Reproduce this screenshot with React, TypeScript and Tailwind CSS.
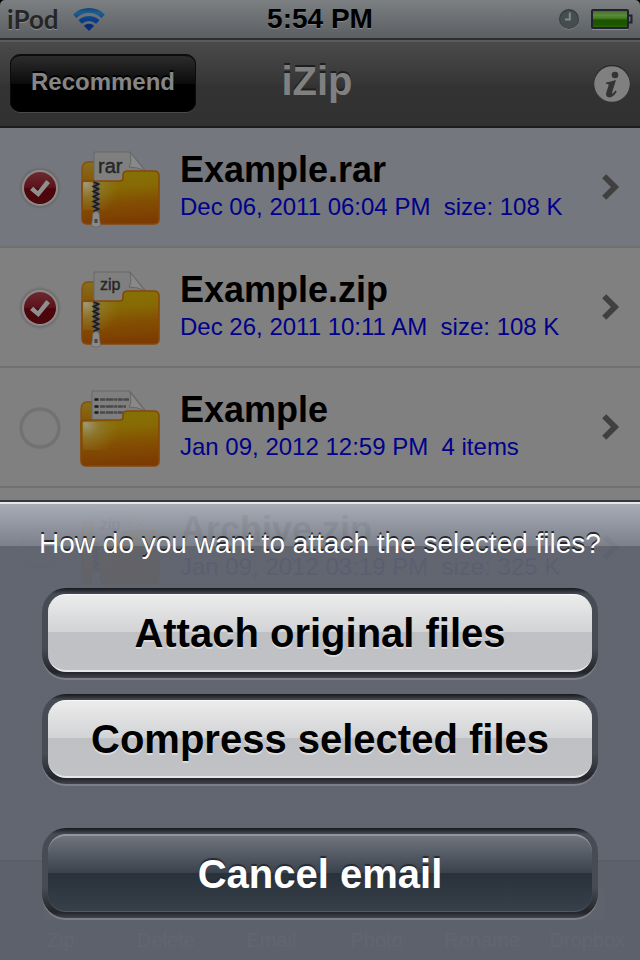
import { useState } from "react";

type Kind = "rar" | "zip" | "folder";

interface Entry {
  name: string;
  detail: string;
  kind: Kind;
  selected: boolean;
}

const entries: Entry[] = [
  { name: "Example.rar", detail: "Dec 06, 2011 06:04 PM  size: 108 K", kind: "rar", selected: true },
  { name: "Example.zip", detail: "Dec 26, 2011 10:11 AM  size: 108 K", kind: "zip", selected: true },
  { name: "Example", detail: "Jan 09, 2012 12:59 PM  4 items", kind: "folder", selected: false },
  { name: "Archive.zip", detail: "Jan 09, 2012 03:19 PM  size: 325 K", kind: "zip", selected: false },
];

const tools = ["Zip", "Delete", "Email", "Photo", "Rename", "Dropbox"];

function WifiIcon() {
  return (
    <svg width="32" height="24" viewBox="0 0 32 24" aria-hidden="true">
      <defs>
        <linearGradient id="wifi" x1="0" y1="0" x2="0" y2="24" gradientUnits="userSpaceOnUse">
          <stop offset="0" stopColor="#123c74" />
          <stop offset="0.25" stopColor="#1b6190" />
          <stop offset="0.5" stopColor="#0b3f88" />
          <stop offset="1" stopColor="#052d78" />
        </linearGradient>
      </defs>
      <g fill="none" stroke="url(#wifi)" strokeWidth="4.8">
        <path d="M1.8 9.2 A20.5 20.5 0 0 1 30.2 9.2" />
        <path d="M7.2 15 A12.8 12.8 0 0 1 24.8 15" />
      </g>
      <path d="M16 24 L10.8 18.8 A7.4 7.4 0 0 1 21.2 18.8 Z" fill="#052d78" />
    </svg>
  );
}

function ClockIcon() {
  return (
    <svg width="20" height="21" viewBox="0 0 20 21" aria-hidden="true">
      <circle cx="10" cy="11" r="9.6" fill="#8a8e90" />
      <circle cx="10" cy="10" r="10" fill="#353b3e" />
      <circle cx="10" cy="10.3" r="9" fill="#454d4e" />
      <path d="M10.8 3.5 V10.6 H6" fill="none" stroke="#858a8b" strokeWidth="2" />
    </svg>
  );
}

function BatteryIcon() {
  return (
    <svg width="42" height="21" viewBox="0 0 42 21" aria-hidden="true">
      <defs>
        <linearGradient id="battery" x1="0" y1="0" x2="0" y2="1">
          <stop offset="0" stopColor="#3d6b22" />
          <stop offset="0.3" stopColor="#5d8a3a" />
          <stop offset="0.5" stopColor="#3a7318" />
          <stop offset="0.55" stopColor="#1c5403" />
          <stop offset="0.8" stopColor="#1c5600" />
          <stop offset="1" stopColor="#2f6d0a" />
        </linearGradient>
      </defs>
      <path d="M1 20.5 H37" stroke="#8b8f92" />
      <rect x="1" y="1" width="36" height="18" rx="1" fill="url(#battery)" stroke="#21212f" strokeWidth="2" />
      <path d="M38 6.5 H40.5 V13.5 H38" fill="none" stroke="#21212f" strokeWidth="2" />
    </svg>
  );
}

function InfoIcon() {
  return (
    <svg width="36" height="37" viewBox="0 0 36 37" aria-hidden="true">
      <circle cx="18" cy="18" r="18" fill="#252525" />
      <circle cx="18" cy="19" r="17.8" fill="#808080" />
      <circle cx="21" cy="10" r="3.3" fill="#343434" />
      <path
        d="M12 17.4 Q16.5 16.6 22 15 L18.4 26.4 Q17.6 29 18.6 28.6 Q19.8 28 21.4 25.6 L22.8 26.6 Q19.6 32.4 15.4 32.4 Q11.2 32.2 12.2 27.8 L14.6 20.4 Q15.2 18.6 12 18.9 Z"
        fill="#343434"
      />
    </svg>
  );
}

function FolderIcon({ kind }: { kind: Kind }) {
  const archive = kind !== "folder";
  return (
    <svg width="80" height="78" viewBox="0 0 80 78" className="mt-1 shrink-0" aria-hidden="true">
      <defs>
        <linearGradient id="folderFront" x1="0.4" y1="0" x2="0.5" y2="1">
          <stop offset="0" stopColor="#857206" />
          <stop offset="0.3" stopColor="#876a04" />
          <stop offset="0.6" stopColor="#834f02" />
          <stop offset="1" stopColor="#7c3a02" />
        </linearGradient>
        <linearGradient id="folderBack" x1="0" y1="0" x2="0" y2="1">
          <stop offset="0" stopColor="#87701c" />
          <stop offset="1" stopColor="#834b00" />
        </linearGradient>
        <radialGradient id="folderShine" gradientUnits="userSpaceOnUse" cx="6" cy="34" r="34">
          <stop offset="0" stopColor="#a09a80" stopOpacity="0.95" />
          <stop offset="0.4" stopColor="#928040" stopOpacity="0.6" />
          <stop offset="1" stopColor="#8f7a20" stopOpacity="0" />
        </radialGradient>
      </defs>
      <path
        d={archive ? "M2 20 Q2 12 8 12 H20 V40 H2 Z" : "M1 20 Q1 12 7 12 H20 V40 H1 Z"}
        fill="url(#folderBack)"
        stroke="#85500f"
        strokeWidth="1.4"
      />
      <path
        d={archive ? "M14 2 H50 L65 20 V34 H14 Z" : "M12 1 H50 L65 20 V34 H12 Z"}
        fill="#7f7f7f"
        stroke="#686868"
      />
      <path d="M50 2 Q52 13 49 17 Q58 17 65 21 Z" fill="#898989" stroke="#666666" />
      {kind === "folder" && (
        <g stroke="#4a4a4a" strokeWidth="2.4">
          <path d="M14.5 9.5 H18.5 M14.5 16.5 H18.5 M14.5 22.5 H18.5" stroke="#1b1b1b" />
          <path d="M20 9.5 H49 M20 16.5 H46 M20 22.5 H44" strokeDasharray="5 0.6 8 0.6 3 0.6" />
        </g>
      )}
      {archive && (
        <text
          x={kind === "rar" ? 18 : 20}
          y={kind === "rar" ? 23 : 20}
          fontFamily="'Liberation Sans', Arial, sans-serif"
          fontSize={kind === "rar" ? 20 : 16}
          fill="#262626"
          stroke="#262626"
          strokeWidth="0.4"
        >
          {kind}
        </text>
      )}
      <path
        d={
          archive
            ? "M2 33 Q2 31 5 31 H40 Q43 31 43 28 V25 Q43 21 48 21 H74 Q79 21 79 26 V69 Q79 74 74 74 H7 Q2 74 2 69 Z"
            : "M1 33 Q1 30 5 30 H40 Q43 30 43 27 V25 Q43 21 48 21 H74 Q79 21 79 26 V71 Q79 76 74 76 H6 Q1 76 1 71 Z"
        }
        fill="url(#folderFront)"
        stroke="#874708"
        strokeWidth="1.6"
      />
      <path d="M3 32 H44 L48 23 H77 V60 H3 Z" fill="url(#folderShine)" />
      {archive && (
        <g>
          <path d="M16 31 V63" stroke="#5c5c5c" strokeWidth="6" />
          <path
            d="M13.500 32 L18.500 34 L13.500 36.500 L18.500 39 L13.500 41.500 L18.500 44 L13.500 46.500 L18.500 49 L13.500 51.500 L18.500 54 L13.500 56.500 L18.500 59 L13.500 61.500"
            fill="none"
            stroke="#1c1c1c"
            strokeWidth="1.8"
          />
          <path d="M13 63 Q16 60 19 63 L20.500 76 Q16 78.500 11.500 76 Z" fill="#898989" stroke="#666666" strokeWidth="0.8" />
          <rect x="14.500" y="69" width="3" height="4" fill="#4b4438" />
        </g>
      )}
    </svg>
  );
}

function SelectionMark({ selected }: { selected: boolean }) {
  return (
    <svg width="44" height="44" viewBox="0 0 44 44" aria-hidden="true">
      <defs>
        <linearGradient id="mark" x1="0" y1="0" x2="0" y2="1">
          <stop offset="0" stopColor="#6c2a31" />
          <stop offset="0.5" stopColor="#5c1119" />
          <stop offset="0.52" stopColor="#4d040a" />
          <stop offset="1" stopColor="#4b080c" />
        </linearGradient>
        <radialGradient id="halo">
          <stop offset="0.8" stopColor="#505050" stopOpacity="0.6" />
          <stop offset="1" stopColor="#707070" stopOpacity="0" />
        </radialGradient>
      </defs>
      {selected ? (
        <g>
          <circle cx="22" cy="22" r="22" fill="url(#halo)" />
          <circle cx="22" cy="22" r="18.200" fill="#8b8988" />
          <circle cx="22" cy="22" r="16" fill="url(#mark)" />
          <path d="M12 24 L15.300 20.800 L19.800 25 L28.300 14 L32 17 L20.500 31 Z" fill="#8f8f8f" />
        </g>
      ) : (
        <circle cx="22" cy="22" r="19" fill="none" stroke="#727272" strokeWidth="3.4" />
      )}
    </svg>
  );
}

function Chevron() {
  return (
    <svg width="18" height="28" viewBox="0 0 18 28" className="shrink-0" aria-hidden="true">
      <path d="M2.200 3.200 L13 14 L2.200 24.800" fill="none" stroke="#404040" strokeWidth="5.800" />
    </svg>
  );
}

function Row({ entry }: { entry: Entry }) {
  const [selected, setSelected] = useState(entry.selected);
  const tint = entry.kind === "rar" ? "bg-[#74777d]" : "bg-[#808080]";
  return (
    <li className={`flex h-[120px] items-center border-b-2 border-[#707070] pl-[18px] pr-5 ${tint}`}>
      <label className="mt-0.5 shrink-0">
        <input
          type="checkbox"
          className="sr-only"
          checked={selected}
          onChange={() => setSelected(!selected)}
          aria-label={`Select ${entry.name}`}
        />
        <SelectionMark selected={selected} />
      </label>
      <button type="button" className="ml-[18px] flex min-w-0 flex-1 items-center text-left">
        <FolderIcon kind={entry.kind} />
        <span className="mb-1 ml-5 min-w-0 flex-1">
          <span className="block truncate text-4xl leading-[44px] font-bold text-black">{entry.name}</span>
          <span className="block text-2xl leading-[30px] whitespace-pre text-[#00008b]">{entry.detail}</span>
        </span>
        <Chevron />
      </button>
    </li>
  );
}

function SheetButton({ label, dark = false }: { label: string; dark?: boolean }) {
  const face = dark
    ? "border-t-2 border-b border-t-[#92959c] border-b-[#535861] bg-[linear-gradient(#70747c_0%,#3a424d_49%,#29313a_50%,#37404a_100%)] text-white [text-shadow:0_-2px_1px_#242a33]"
    : "border-t border-b-2 border-t-[#f8f8f8] border-b-[#e6e6e8] bg-[linear-gradient(#ececec_0%,#d2d3d5_49%,#bfc0c4_50%,#c1c2c6_100%)] text-black [text-shadow:0_2px_0_#dcdcde]";
  return (
    <button
      type="button"
      className="block w-full rounded-[24px] bg-[linear-gradient(#15181c_0px,#474b54_6px,#474b54_60px,#222429_84px,#41444b_90px)] p-[6px] shadow-[0_2px_0_#7b7f88]"
    >
      <span className={`block h-[78px] rounded-[18px] text-[40px] leading-[76px] font-bold ${face}`}>{label}</span>
    </button>
  );
}

export default function App() {
  return (
    <div className="relative flex min-h-screen flex-col overflow-hidden bg-black font-['Liberation_Sans',Arial,sans-serif]">
      <header>
        <div className="grid h-10 grid-cols-3 items-center rounded-t-[5px] border-b-2 border-[#2c2f31] bg-linear-to-b from-[#7c8082] to-[#5b5f63] px-[7px]">
          <div className="flex items-center gap-[14px]">
            <span className="font-[Lato,sans-serif] text-[26px] leading-8 font-bold text-[#262626] [text-shadow:0_1px_0_#8b8f91]">
              iPod
            </span>
            <WifiIcon />
          </div>
          <span className="text-center text-[28px] leading-8 font-bold text-black [text-shadow:0_1px_0_#85898b]">
            5:54 PM
          </span>
          <div className="flex items-center justify-end gap-3">
            <ClockIcon />
            <BatteryIcon />
          </div>
        </div>
        <div className="grid h-[88px] grid-cols-3 items-center border-t-2 border-b-2 border-t-[#5a5a5a] border-b-[#1c1c1c] bg-[linear-gradient(#4a4a4a_0%,#363636_50%,#333333_51%,#313131_100%)] px-[10px] pb-0.5">
          <button
            type="button"
            className="h-[58px] w-[186px] rounded-[10px] border-t-2 border-[#0c0c0c] bg-[linear-gradient(#2c2c2c_0%,#0b0b0b_49%,#000000_51%)] pb-1 text-2xl font-bold text-[#868686] shadow-[0_1px_0_#4b4b4b,inset_1px_0_0_#0c0c0c,inset_-1px_0_0_#0c0c0c] [text-shadow:0_-2px_0_#000000]"
          >
            Recommend
          </button>
          <h1 className="pr-1.5 pb-1 text-center text-[40px] leading-[44px] font-bold text-[#808080] [text-shadow:0_-2px_0_#1e1e1e]">
            iZip
          </h1>
          <button type="button" aria-label="Information" className="justify-self-end">
            <InfoIcon />
          </button>
        </div>
      </header>

      <ul className="flex-1 bg-[#808080]">
        {entries.map((entry) => (
          <Row key={entry.name} entry={entry} />
        ))}
        <li className="h-[120px] border-b-2 border-[#707070]" />
        <li className="h-[120px]" />
      </ul>

      <nav className="absolute inset-x-0 bottom-0 grid h-[100px] grid-cols-6 items-end border-t-2 border-black bg-[#303238] pb-2 pl-2">
        {tools.map((tool) => (
          <button key={tool} type="button" className="flex flex-col items-center gap-2 text-xl leading-6 text-[#75777c]">
            <span className="h-8 w-9 rounded-sm bg-[#505258]" />
            {tool}
          </button>
        ))}
      </nav>

      <section
        role="dialog"
        aria-labelledby="sheet-title"
        className="absolute inset-x-0 bottom-0 border-t-2 border-[#35383c] bg-[linear-gradient(#e4e6e9_0px,#e4e6e9_2px,#aaafb9ed_2px,#7b808bed_44px,#60646ff0_44px,#60646ff0_100%)] px-[42px] pb-[42px]"
      >
        <h2
          id="sheet-title"
          className="-mx-8 pt-[26px] pb-7 text-center text-[28px] leading-8 text-white [text-shadow:0_-2px_0_#26282d]"
        >
          How do you want to attach the selected files?
        </h2>
        <div className="flex flex-col gap-4">
          <SheetButton label="Attach original files" />
          <SheetButton label="Compress selected files" />
        </div>
        <div className="mt-11">
          <SheetButton label="Cancel email" dark />
        </div>
      </section>
    </div>
  );
}
